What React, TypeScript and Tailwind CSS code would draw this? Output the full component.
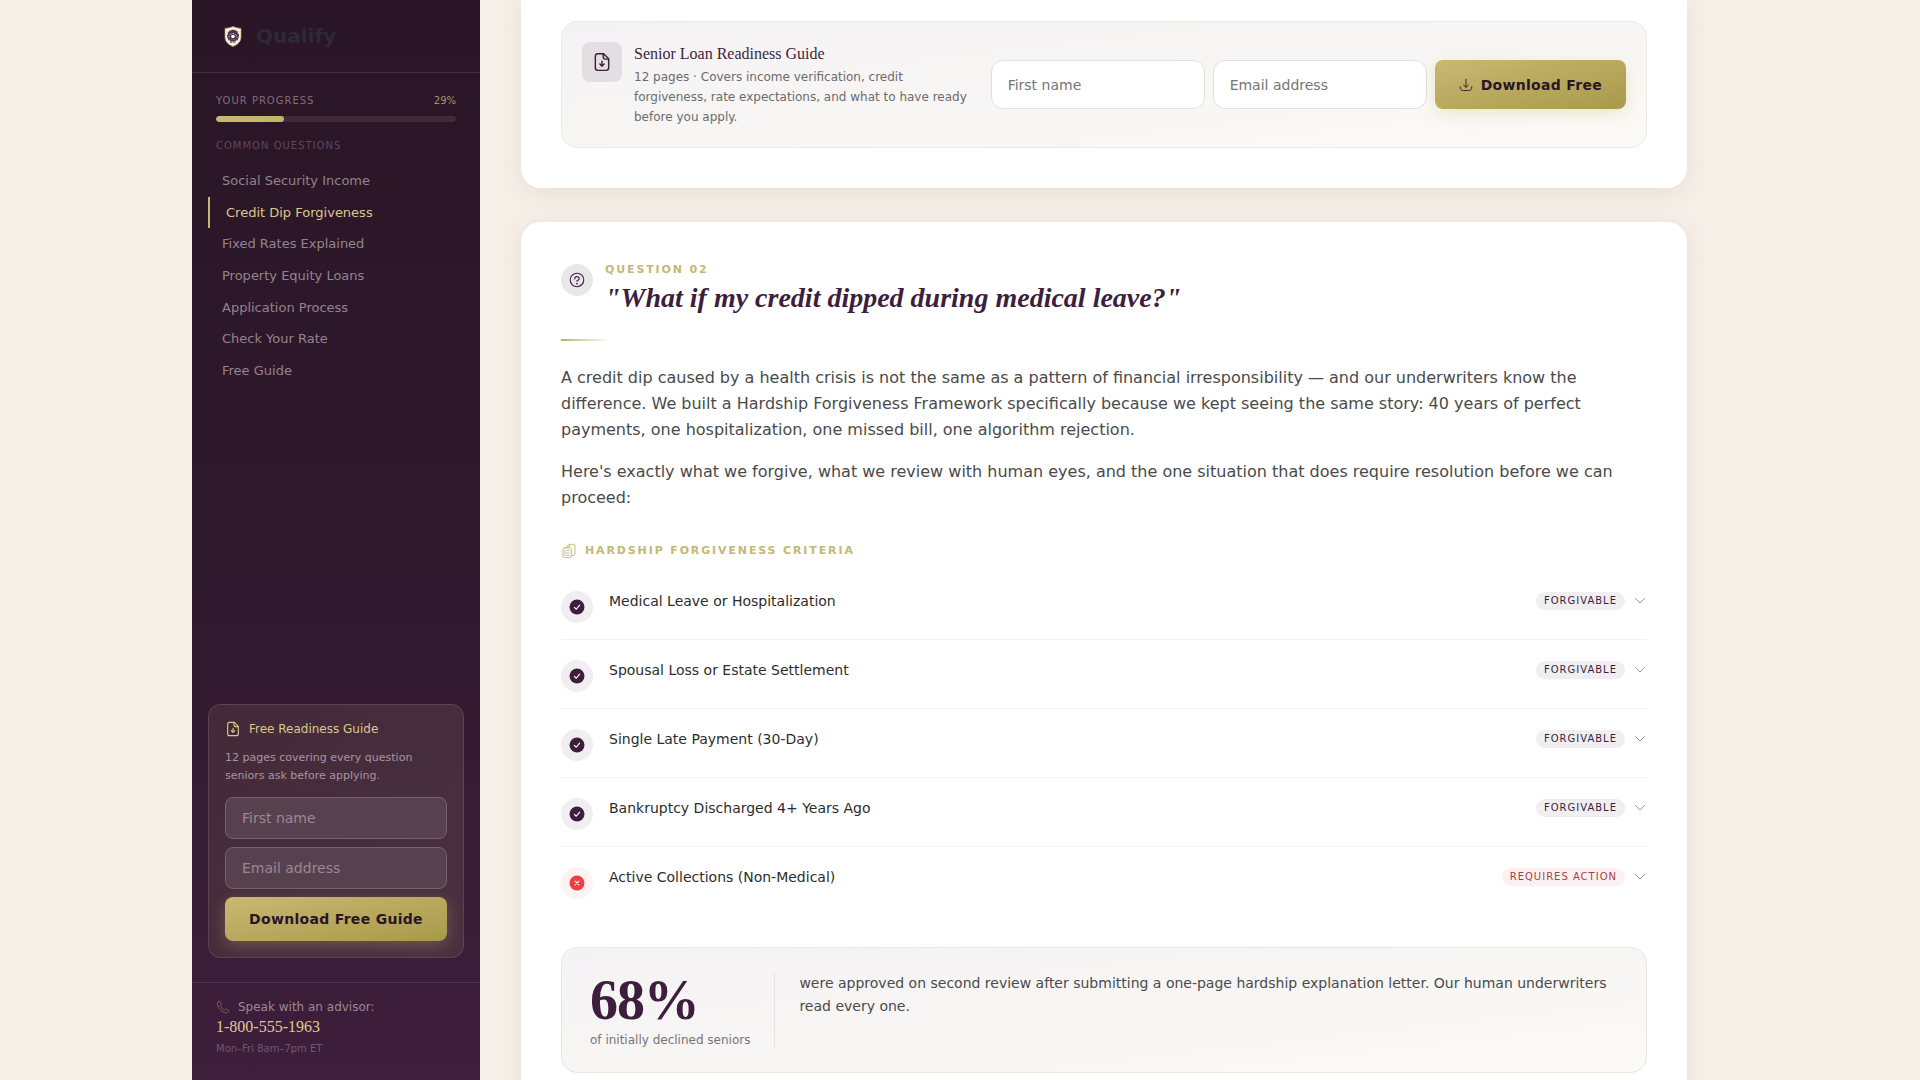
import React from "react";
import { PiQuestion } from "react-icons/pi";

const navItems = [
  "Social Security Income",
  "Credit Dip Forgiveness",
  "Fixed Rates Explained",
  "Property Equity Loans",
  "Application Process",
  "Check Your Rate",
  "Free Guide",
];

const criteria = [
  { label: "Medical Leave or Hospitalization", ok: true },
  { label: "Spousal Loss or Estate Settlement", ok: true },
  { label: "Single Late Payment (30-Day)", ok: true },
  { label: "Bankruptcy Discharged 4+ Years Ago", ok: true },
  { label: "Active Collections (Non-Medical)", ok: false },
];

function ShieldLogo() {
  return (
    <svg viewBox="0 0 18 21" className="h-[21px] w-[18px]" aria-hidden="true">
      <path d="M9 0.500 C11.500 1.800 14.500 2 17 2.500 V11 C17 16 13 19 9 20.500 C5 19 1 16 1 11 V2.500 C3.500 2 6.500 1.800 9 0.500 Z" fill="#f7eedb" stroke="#b99d6c" strokeWidth="0.7" />
      <circle cx="9" cy="9.500" r="6" fill="#4a3247" />
      <path d="M3.500 9 A5.500 5.500 0 0 1 14.500 9 M5 11.500 A4 4 0 0 1 13 11.500" fill="none" stroke="#f7eedb" strokeWidth="0.800" strokeDasharray="1.800 1" />
      <path d="M4 13.500 H14 M6 16 H12" stroke="#6b5573" strokeWidth="1.400" strokeDasharray="2 0.800" />
      <circle cx="9" cy="10.500" r="1.800" fill="#fff" />
    </svg>
  );
}

function FileDown({ className }: { className: string }) {
  return (
    <svg viewBox="0 0 24 24" className={className} fill="none" stroke="currentColor" strokeWidth="1.700" strokeLinecap="round" strokeLinejoin="round" aria-hidden="true">
      <path d="M14 2 H7 Q4 2 4 5 V19 Q4 22 7 22 H17 Q20 22 20 19 V8 Z" />
      <path d="M13.500 2.500 V6 Q13.500 8.500 16 8.500 H19.500" />
      <path d="M12 11 V17 M9.500 14.500 L12 17 L14.500 14.500" />
    </svg>
  );
}

function TrayDownload() {
  return (
    <svg viewBox="0 0 24 24" className="size-3.5" fill="none" stroke="currentColor" strokeWidth="1.500" strokeLinecap="round" strokeLinejoin="round" aria-hidden="true">
      <path d="M12 2 V16 M8 12 L12 16 L16 12 M2 15 C2 20 4 21.500 8 21.500 H16 C20 21.500 22 20 22 15" />
    </svg>
  );
}

function Documents() {
  return (
    <svg viewBox="0 0 24 24" className="size-4" fill="none" stroke="currentColor" strokeWidth="1.400" strokeLinecap="round" strokeLinejoin="round" aria-hidden="true">
      <path d="M5 7.500 H13 Q15.500 7.500 15.500 10 V19.500 Q15.500 22 13 22 H5 Q3 22 3 19.500 V9.500 Q3 7.500 5 7.500 Z" />
      <path d="M8 7 V6 L12.500 2 H18.500 Q21 2 21 4.500 V16 Q21 18.500 18.500 18.500 H16 M8.500 6 H12.500 V2.500" />
      <path d="M6 11.500 V18.500 M8.500 11.500 H12.500 M8.500 15 H12.500 M8.500 18.500 H12.500" />
    </svg>
  );
}

function Phone() {
  return (
    <svg viewBox="0 0 24 24" className="size-3.5 text-[#806a68]" fill="none" stroke="currentColor" strokeWidth="1.500" strokeLinecap="round" strokeLinejoin="round" aria-hidden="true">
      <path d="M5 2.500 C2.500 3 1.800 5.500 2.800 9 C4.500 15 9 19.500 15 21.500 C18.500 22.600 21.500 21.500 22 19 C22 17.500 20 16.500 18 15.500 C16.500 15 15.500 17 14.500 17 C12.500 16.500 8 12 7.500 9.500 C7.500 8.500 9.500 7.500 9 6 C8 4 7 2 5 2.500 Z" />
    </svg>
  );
}

function StatusMark({ ok }: { ok: boolean }) {
  return (
    <svg viewBox="0 0 24 24" className="size-[18px]" aria-hidden="true">
      <circle cx="12" cy="12" r="10" fill="currentColor" />
      <path
        d={ok ? "M8.500 12.500 L11 15 L15.500 9.500" : "M9.500 9.500 L14.500 14.500 M14.500 9.500 L9.500 14.500"}
        fill="none"
        stroke="#fff"
        strokeWidth="1.500"
        strokeLinecap="round"
        strokeLinejoin="round"
      />
    </svg>
  );
}

function Chevron() {
  return (
    <svg viewBox="0 0 14 14" className="size-3.5" fill="none" stroke="#9a9a9a" strokeLinecap="round" strokeLinejoin="round" aria-hidden="true">
      <path d="M2.500 4.500 L7 9 L11.500 4.500" />
    </svg>
  );
}

function Sidebar() {
  return (
    <aside className="flex w-72 shrink-0 flex-col bg-linear-to-b from-[#2a1526] via-[#2f192d] to-[#3d1e3b]">
      <div className="flex h-[73px] items-center gap-3.5 border-b border-[#432d3e] pl-8">
        <ShieldLogo />
        <span className="text-xl font-bold text-[#2d2a35]">Qualify</span>
      </div>
      <div className="px-6 pt-5">
        <div className="flex justify-between text-[10px] leading-4 text-[#806f7a]">
          <span className="tracking-[1px]">YOUR PROGRESS</span>
          <span className="text-[#a8946f]">29%</span>
        </div>
        <div className="mt-[7px] h-1.5 overflow-hidden rounded-full bg-[#412b38]" role="progressbar" aria-label="Your progress" aria-valuenow={29} aria-valuemin={0} aria-valuemax={100}>
          <div className="h-full rounded-full bg-linear-to-r from-[#c9b872] to-[#bfb765]" style={{ width: "28.500%" }} />
        </div>
        <h2 className="mt-4 text-[10px] leading-4 tracking-[1px] text-[#5d4858]">COMMON QUESTIONS</h2>
      </div>
      <nav className="mt-[11px] flex h-[222px] flex-col px-4" aria-label="Common questions">
        {navItems.map((item, i) => (
          <a
            key={item}
            href="#question"
            className={
              i === 1
                ? "flex flex-1 items-center border-l-2 border-[#c9b872] pl-4 text-[13px] leading-5 text-[#dcc78d]"
                : "flex flex-1 items-center pl-3.5 text-[13px] leading-5 text-[#95838f]"
            }
          >
            {item}
          </a>
        ))}
      </nav>
      <form className="mx-4 mt-auto flex flex-col rounded-xl border border-[#594450] bg-linear-to-br from-[#442a39] to-[#493040] p-4" onSubmit={(e) => e.preventDefault()}>
        <h2 className="flex items-center gap-2 text-xs leading-4 text-[#dcc78d]">
          <FileDown className="size-4" />
          Free Readiness Guide
        </h2>
        <p className="mt-3 text-[11px] leading-[18px] text-[#a894a0]">12 pages covering every question seniors ask before applying.</p>
        <input aria-label="First name" placeholder="First name" className="mt-3 h-[42px] w-full rounded-lg border border-[#77636b] bg-[#58414f] px-4 text-sm placeholder:text-[#9b8794]" />
        <input aria-label="Email address" placeholder="Email address" className="mt-2 h-[42px] w-full rounded-lg border border-[#77636b] bg-[#58414f] px-4 text-sm placeholder:text-[#9b8794]" />
        <button className="mt-2 h-11 rounded-lg bg-linear-to-br from-[#c9b872] to-[#a89a4a] text-sm font-bold tracking-[0.3px] text-[#2a1526] shadow-[0_4px_16px_rgba(201,184,114,0.3)]">Download Free Guide</button>
      </form>
      <div className="mt-6 h-[98px] border-t border-[#50394e] px-6 pt-4">
        <div className="flex items-center gap-2 text-xs leading-4 text-[#9c8798]">
          <Phone />
          Speak with an advisor:
        </div>
        <a href="tel:18005551963" className="block font-['Liberation_Serif',serif] text-base leading-6 text-[#e0c993]">1-800-555-1963</a>
        <div className="mt-0.5 text-[10px] leading-4 text-[#6f5870]">Mon–Fri 8am–7pm ET</div>
      </div>
    </aside>
  );
}

function GuideBanner() {
  return (
    <form className="flex items-center gap-5 rounded-2xl border border-[#ebe9e4] bg-linear-to-br from-[#f4f2f4] to-[#fbfaf5] px-5 py-5" onSubmit={(e) => e.preventDefault()}>
      <div className="flex flex-1 gap-3">
        <div className="flex size-10 shrink-0 items-center justify-center rounded-lg bg-[#e2dee2] text-[#3d1f3d]">
          <FileDown className="size-5" />
        </div>
        <div>
          <h3 className="font-['Liberation_Serif',serif] text-base leading-6 text-[#3d1f3d]">Senior Loan Readiness Guide</h3>
          <p className="mt-px text-xs leading-5 text-[#6b6b6b]">12 pages · Covers income verification, credit forgiveness, rate expectations, and what to have ready before you apply.</p>
        </div>
      </div>
      <div className="flex gap-2">
        <input aria-label="First name" placeholder="First name" className="h-[49px] w-[214px] rounded-xl border border-[#e2e0e2] bg-white px-4 text-sm placeholder:text-[#757575]" />
        <input aria-label="Email address" placeholder="Email address" className="h-[49px] w-[214px] rounded-xl border border-[#e2e0e2] bg-white px-4 text-sm placeholder:text-[#757575]" />
        <button className="flex h-[49px] items-center gap-2 rounded-lg bg-linear-to-br from-[#c9b872] to-[#a89a4a] px-6 text-sm font-bold tracking-[0.3px] text-[#2a1526] shadow-[0_4px_16px_rgba(201,184,114,0.3)]">
          <TrayDownload />
          Download Free
        </button>
      </div>
    </form>
  );
}

export default function App() {
  return (
    <div className="h-screen overflow-hidden bg-[#f6efe8] font-['DejaVu_Sans',sans-serif]">
      <div className="mx-auto flex h-full max-w-[1536px]">
        <Sidebar />
        <main className="min-w-0 flex-1 px-[41px]">
          <section className="rounded-b-[20px] bg-white px-10 pb-10 pt-[21px] shadow-[0_4px_24px_rgba(61,55,31,0.09)]">
            <GuideBanner />
          </section>
          <section id="question" className="mt-[34px] rounded-[20px] bg-white px-10 pb-16 pt-10 shadow-[0_4px_24px_rgba(61,55,31,0.09)]">
            <div className="flex gap-3">
              <div className="mt-0.5 flex size-8 shrink-0 items-center justify-center rounded-full bg-[#e9e7e9] text-[#3d1f3d]">
                <PiQuestion className="size-[18px]" />
              </div>
              <div>
                <div className="text-[11px] font-bold leading-4 tracking-[0.17em] text-[#c4b873]">QUESTION 02</div>
                <h1 className="font-['Liberation_Serif',serif] text-[28px] font-bold italic leading-10 text-[#3d1f3d]">"What if my credit dipped during medical leave?"</h1>
              </div>
            </div>
            <div className="mt-[21px] h-0.5 w-12 bg-linear-to-r from-[#b9af70] to-transparent" />
            <div className="mt-6 flex flex-col gap-4 text-base leading-[26px] text-[#4a4a4a]">
              <p>A credit dip caused by a health crisis is not the same as a pattern of financial irresponsibility — and our underwriters know the difference. We built a Hardship Forgiveness Framework specifically because we kept seeing the same story: 40 years of perfect payments, one hospitalization, one missed bill, one algorithm rejection.</p>
              <p>Here's exactly what we forgive, what we review with human eyes, and the one situation that does require resolution before we can proceed:</p>
            </div>
            <h2 className="mt-8 flex items-center gap-2 text-[11px] font-bold leading-4 tracking-[0.17em] text-[#c4b873]">
              <Documents />
              HARDSHIP FORGIVENESS CRITERIA
            </h2>
            <div className="mt-3">
              {criteria.map((c) => (
                <button key={c.label} className="flex h-[69px] w-full items-start gap-4 border-b border-[#f3f2f3] pt-5 text-left last:border-b-0">
                  <span className={c.ok ? "flex size-8 items-center justify-center rounded-full bg-[#f0eef0] text-[#3d1f3d]" : "flex size-8 items-center justify-center rounded-full bg-[#fdf3f3] text-[#ea4044]"}>
                    <StatusMark ok={c.ok} />
                  </span>
                  <span className="flex-1 text-sm leading-5 text-[#2d2d2d]">{c.label}</span>
                  <span className="flex items-center gap-2 pt-px">
                    <span className={c.ok ? "rounded-full bg-[#f0eef1] px-2 text-[10px] leading-[18px] tracking-[1px] text-[#3d1f3d]" : "rounded-full bg-[#fdf0f0] px-2 text-[10px] leading-[18px] tracking-[1px] text-[#a63f45]"}>
                      {c.ok ? "FORGIVABLE" : "REQUIRES ACTION"}
                    </span>
                    <Chevron />
                  </span>
                </button>
              ))}
            </div>
            <div className="mt-[31px] flex gap-6 rounded-2xl border border-[#e9e6df] bg-linear-to-br from-[#f4f2f4] to-[#fbfaf5] px-7 py-6">
              <div className="shrink-0 border-r border-[#e6e3e6] pr-6">
                <div className="font-['Liberation_Serif',serif] text-[56px] font-bold leading-[56px] tracking-[-0.02em] text-[#3d1f3d]">68%</div>
                <div className="mt-1 text-xs leading-4 text-[#777377]">of initially declined seniors</div>
              </div>
              <p className="text-sm leading-[23px] text-[#4a4a4a]">were approved on second review after submitting a one-page hardship explanation letter. Our human underwriters read every one.</p>
            </div>
          </section>
        </main>
      </div>
    </div>
  );
}
